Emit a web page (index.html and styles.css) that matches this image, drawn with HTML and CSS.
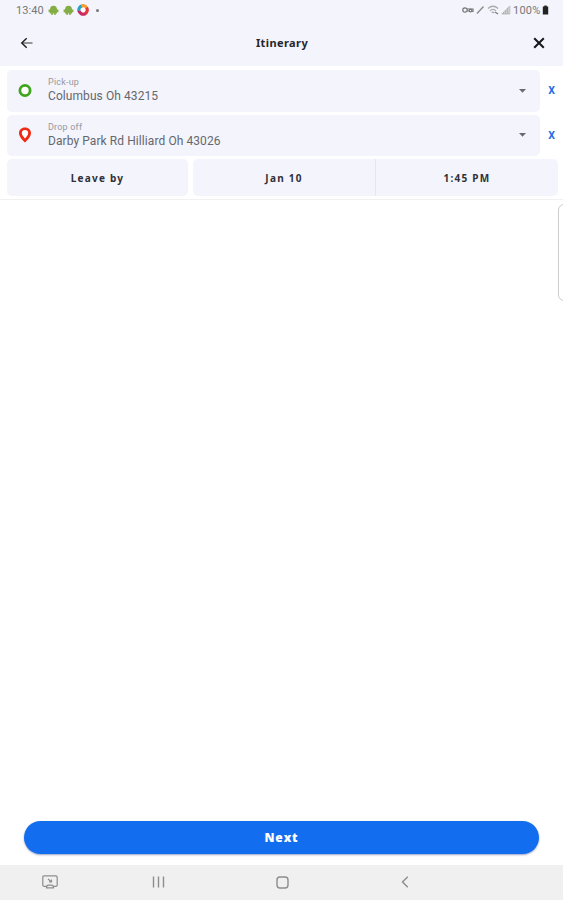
FILE: index.html
```html
<!DOCTYPE html>
<html lang="en">
<head>
  <meta charset="UTF-8" />
  <meta name="viewport" content="width=device-width, initial-scale=1.0" />
  <title>Itinerary</title>
  <link rel="stylesheet" href="styles.css">
</head>
<body>
  <div class="screen">
    <div class="status-bar">
      <span class="clock">13:40</span>
      <svg class="android" width="11" height="11" viewBox="0 0 11 11">
        <path d="M2 4.500a3.500 3.800 0 0 1 7 0zM2 4.500h7v4H7.700V10H6.200V8.500H4.800V10H3.300V8.500H2zM.6 4.500H2v2.700H.6zM9 4.500h1.400v2.700H9z" fill="#84ad45"/>
      </svg>
      <svg class="android" width="11" height="11" viewBox="0 0 11 11">
        <path d="M2 4.500a3.500 3.800 0 0 1 7 0zM2 4.500h7v4H7.700V10H6.200V8.500H4.800V10H3.300V8.500H2zM.6 4.500H2v2.700H.6zM9 4.500h1.400v2.700H9z" fill="#84ad45"/>
      </svg>
      <svg class="app-badge" width="12" height="12" viewBox="0 0 12 12">
        <circle cx="6" cy="6" r="4" fill="#fff"/>
        <g fill="none" stroke-width="3.200">
          <path d="M2 7A4.200 4.200 0 0 1 5 1.900" stroke="#2c9fc9"/>
          <path d="M4.500 2A4.200 4.200 0 0 1 9.700 4" stroke="#f5a02c"/>
          <path d="M9.500 3.600A4.200 4.200 0 0 1 7.600 9.900" stroke="#e2383a"/>
          <path d="M8 9.800A4.200 4.200 0 0 1 2 6.800" stroke="#ca2863"/>
        </g>
      </svg>
      <span class="more-dot"></span>
      <div class="status-right">
        <svg width="12" height="10" viewBox="0 0 12 10" fill="none" stroke="#777" stroke-width="1.200">
          <circle cx="3" cy="5" r="2.200"/>
          <path d="M5 4h6v2.500H9.500M5 6h2"/>
          <circle cx="8.500" cy="5.500" r="1.300"/>
        </svg>
        <svg width="9" height="10" viewBox="0 0 9 10"><path d="M1 8.500L7.500 1.500" stroke="#888" stroke-width="1.300"/></svg>
        <svg width="12" height="10" viewBox="0 0 12 10" fill="none" stroke="#aaa" stroke-width="1.200">
          <path d="M1 3.500q5-4.500 10 0M3 5.700q3-2.700 6 0M4.700 7.700q1.300-1.200 2.600 0"/>
          <path d="M8 7l3 2" stroke="#777"/>
        </svg>
        <svg width="10" height="10" viewBox="0 0 10 10">
          <path d="M.8 9L8.800 1v8z" fill="#ddd" stroke="#aaa" stroke-width=".7"/>
          <path d="M2.800 9V7M4.800 9V5M6.800 9V3" stroke="#aaa"/>
        </svg>
        <span class="battery-text">100%</span>
        <svg class="battery" width="7" height="10" viewBox="0 0 7 10"><path d="M2.300.5h2.400v1h1.500v8H.800v-8h1.500z" fill="#222"/></svg>
      </div>
    </div>

    <header class="app-bar">
      <svg width="13" height="12" viewBox="0 0 13 12" fill="none" stroke-width="1.500">
        <path d="M2 6h10.500" stroke="#777"/>
        <path d="M6.700 1.200L1.800 6l4.900 4.800" stroke="#222"/>
      </svg>
      <h1>Itinerary</h1>
      <svg width="12" height="12" viewBox="0 0 12 12"><path d="M1.200 1.200l9.600 9.600M10.800 1.200L1.200 10.800" stroke="#15171b" stroke-width="2"/></svg>
    </header>

    <main>
      <div class="stop">
        <div class="stop-field">
          <svg class="stop-icon" width="14" height="14" viewBox="0 0 14 14"><circle cx="7" cy="6.500" r="5.100" fill="#fff" stroke="#3fa51b" stroke-width="2.800"/></svg>
          <div class="stop-text">
            <span class="label">Pick-up</span>
            <span class="address">Columbus Oh 43215</span>
          </div>
          <svg class="caret" width="7" height="4" viewBox="0 0 7 4"><path d="M0 0h7L3.500 3.800z" fill="#6a6a6e"/></svg>
        </div>
        <button class="remove">X</button>
      </div>

      <div class="stop">
        <div class="stop-field">
          <svg class="stop-icon" width="14" height="16" viewBox="0 0 14 16"><path d="M7 .5C3.500.5 1 2.900 1 6.100c0 3.600 3 6.500 6 9.500 3-3 6-5.900 6-9.500C13 2.900 10.500.5 7 .5z" fill="#ee2b14"/><path d="M7 3C5 3 3.800 4.300 3.800 6c0 1.600 1.400 3.600 3.200 5.600C8.800 9.600 10.200 7.600 10.200 6 10.200 4.300 9 3 7 3z" fill="#fff"/></svg>
          <div class="stop-text">
            <span class="label">Drop off</span>
            <span class="address">Darby Park Rd Hilliard Oh 43026</span>
          </div>
          <svg class="caret" width="7" height="4" viewBox="0 0 7 4"><path d="M0 0h7L3.500 3.800z" fill="#6a6a6e"/></svg>
        </div>
        <button class="remove">X</button>
      </div>

      <div class="schedule">
        <button class="schedule-item leave">Leave by</button>
        <div class="date-time">
          <button class="schedule-item">Jan 10</button>
          <button class="schedule-item time">1:45 PM</button>
        </div>
      </div>
    </main>

    <div class="edge-handle"></div>

    <footer>
      <button class="next-button">Next</button>
    </footer>

    <nav class="nav-bar">
      <svg width="16" height="14" viewBox="0 0 16 14" fill="none" stroke="#8d8d8d" stroke-width="1.200">
        <path d="M4.500 11.400H2.200q-1.400 0-1.400-1.400V2.200Q.8.900 2.200.9h11.600q1.400 0 1.400 1.300V10q0 1.400-1.400 1.400h-2.300"/>
        <path d="M4.500 12.800q0-2.700 2-2.700h3q2 0 2 2.700zM6 4l3.500 3M9.500 4.500V7H7"/>
      </svg>
      <svg width="13" height="12" viewBox="0 0 13 12"><path d="M1.500.5v11M6.500.5v11M11.500.5v11" stroke="#8d8d8d" stroke-width="1.400"/></svg>
      <svg width="13" height="13" viewBox="0 0 13 13"><rect x="1" y="1" width="11" height="11" rx="3" fill="none" stroke="#8d8d8d" stroke-width="1.400"/></svg>
      <svg width="8" height="12" viewBox="0 0 8 12"><path d="M6.800.8L1.500 6l5.300 5.200" fill="none" stroke="#8d8d8d" stroke-width="1.400"/></svg>
    </nav>
  </div>
</body>
</html>
```
FILE: styles.css
```css
* {
    box-sizing: border-box;
}
body {
    margin: 0;
    font-family: Roboto, sans-serif;
    background: #fff;
    overflow: hidden;
}
button {
    border: none;
    padding: 0;
    background: none;
    font-family: inherit;
    white-space: nowrap;
}
svg {
    display: block;
    flex: none;
}
.screen {
    position: relative;
    display: flex;
    flex-direction: column;
    width: 563px;
    height: 900px;
    overflow: hidden;
}
.status-bar {
    display: flex;
    align-items: center;
    height: 20px;
    padding: 0 14px 0 16px;
    background: #f3f4fc;
    color: #777;
    font-size: 11px;
}
.clock {
    width: 32px;
    letter-spacing: 0.1px;
}
.android {
    margin-right: 4px;
}
.app-badge {
    margin-left: -1px;
}
.more-dot {
    width: 3px;
    height: 3px;
    margin-left: 7px;
    border-radius: 50%;
    background: #777;
}
.status-right {
    display: flex;
    align-items: center;
    gap: 2px;
    margin-left: auto;
}
.battery-text {
    width: 29px;
    letter-spacing: 0.2px;
    white-space: nowrap;
}
.battery {
    margin-left: -2px;
}
.app-bar {
    display: flex;
    align-items: center;
    justify-content: space-between;
    height: 46px;
    padding: 0 18px 1px 20px;
    background: #f3f4fc;
}
h1 {
    margin: 0 2px 0 0;
    font-family: "Noto Sans", sans-serif;
    font-size: 11px;
    font-weight: 700;
    line-height: 15px;
    letter-spacing: 0.4px;
    color: #25262b;
}
main {
    display: flex;
    flex-direction: column;
    gap: 3px;
    height: 134px;
    padding: 4px 5px 0 7px;
    border-bottom: 1px solid #f1f1f1;
}
.stop {
    display: flex;
}
.stop-field {
    display: flex;
    align-items: center;
    width: 533px;
    height: 41.500px;
    padding: 0 14px 0 11px;
    border-radius: 5px;
    background: #f3f4fc;
}
.stop-icon {
    margin-right: 16px;
}
.stop-text {
    display: flex;
    flex-direction: column;
    flex: 1;
    padding-top: 1px;
}
.label {
    font-size: 9px;
    line-height: 10px;
    letter-spacing: 0.2px;
    color: #98989e;
}
.address {
    font-size: 12px;
    line-height: 18px;
    letter-spacing: 0.080px;
    color: #66676d;
    white-space: nowrap;
}
.remove {
    flex: 1;
    padding-left: 5px;
    text-align: center;
    font-size: 10.500px;
    font-weight: 700;
    color: #1f6be8;
}
.schedule {
    display: flex;
    gap: 5px;
    height: 37px;
}
.schedule-item {
    flex: 1;
    font-family: "Noto Sans", sans-serif;
    font-size: 10px;
    font-weight: 700;
    letter-spacing: 1.250px;
    color: #2f3038;
}
.leave {
    flex: none;
    width: 181px;
    border-radius: 5px;
    background: #f3f4fc;
}
.date-time {
    display: flex;
    flex: 1;
    border-radius: 5px;
    background: #f3f4fc;
}
.time {
    border-left: 1px solid #e6e7ee;
}
.edge-handle {
    position: absolute;
    top: 204px;
    right: -8px;
    width: 13px;
    height: 97px;
    border: 1px solid #ccc;
    border-radius: 6px;
    background: #fff;
}
footer {
    margin-top: auto;
    padding: 0 24px 11px;
}
.next-button {
    display: block;
    width: 515px;
    height: 33px;
    border-radius: 17px;
    background: #126eef;
    box-shadow: 0 1px 2px rgba(30, 50, 130, 0.45);
    color: #fff;
    font-family: "Open Sans", sans-serif;
    font-size: 12px;
    font-weight: 800;
    letter-spacing: 0.900px;
}
.nav-bar {
    display: flex;
    align-items: center;
    height: 35px;
    padding: 0 0 1px 42px;
    background: #f0f0f0;
}
.nav-bar svg:nth-child(2) {
    margin-left: 94px;
}
.nav-bar svg:nth-child(3) {
    margin-left: 111px;
}
.nav-bar svg:nth-child(4) {
    margin-left: 112px;
}
```
